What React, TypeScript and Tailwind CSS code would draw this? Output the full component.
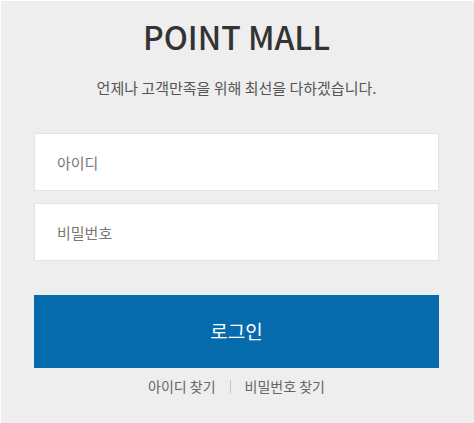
const font = { fontFamily: '"Noto Sans CJK KR", "Noto Sans", sans-serif' };

export default function App() {
  return (
    <div className="min-h-[423px] w-full bg-white pl-px pt-px" style={font}>
      <div className="flex min-h-[422px] flex-col bg-[#eeeeee] pb-[31px] pl-[33px] pr-[35px] pt-[15px]">
        <h1 className="text-center text-[32px] leading-[40px] font-medium text-[#333333]">
          POINT MALL
        </h1>
        <p className="mt-[21px] text-center text-[15px] leading-[22px] text-[#555555]">
          언제나 고객만족을 위해 최선을 다하겠습니다.
        </p>

        <div className="mt-[34px] flex flex-col gap-[12px]">
          <input
            type="text"
            placeholder="아이디"
            className="h-[58px] w-full border border-[#e3e3e3] bg-white px-[22px] text-[15px] text-[#333] outline-none placeholder:text-[#777777]"
          />
          <input
            type="password"
            placeholder="비밀번호"
            className="h-[58px] w-full border border-[#e3e3e3] bg-white px-[22px] text-[15px] text-[#333] outline-none placeholder:text-[#777777]"
          />
        </div>

        <button
          type="button"
          className="mt-[34px] h-[73px] w-full bg-[#066bad] text-[19px] font-normal text-white"
        >
          로그인
        </button>

        <div className="mt-[7px] flex items-center justify-center gap-[14px] text-[14px] leading-[22px] text-[#666666]">
          <a href="#">아이디 찾기</a>
          <span className="h-[13px] w-px bg-[#bfc6cf]" />
          <a href="#">비밀번호 찾기</a>
        </div>
      </div>
    </div>
  );
}
